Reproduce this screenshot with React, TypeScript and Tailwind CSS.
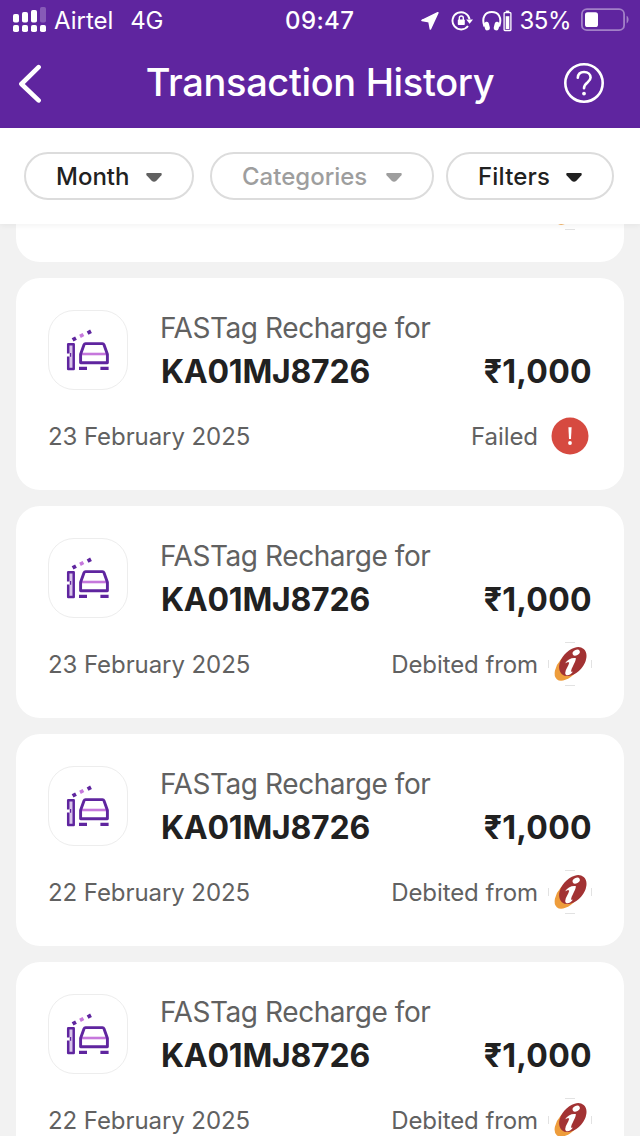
import React from 'react';

interface Transaction {
  id: number;
  title: string;
  vehicle: string;
  amount: string;
  date: string;
  status: 'failed' | 'debited';
}

const transactions: Transaction[] = [
  { id: 2, title: 'FASTag Recharge for', vehicle: 'KA01MJ8726', amount: '₹1,000', date: '23 February 2025', status: 'failed' },
  { id: 3, title: 'FASTag Recharge for', vehicle: 'KA01MJ8726', amount: '₹1,000', date: '23 February 2025', status: 'debited' },
  { id: 4, title: 'FASTag Recharge for', vehicle: 'KA01MJ8726', amount: '₹1,000', date: '22 February 2025', status: 'debited' },
  { id: 5, title: 'FASTag Recharge for', vehicle: 'KA01MJ8726', amount: '₹1,000', date: '22 February 2025', status: 'debited' },
];

const SignalIcon = () => (
  <svg className="mb-0.5 h-[26px] w-[34px]" viewBox="0 0 34 26" fill="#fff">
    <rect x="0" y="7" width="6" height="8.5" rx="1.8" />
    <rect x="9" y="5" width="6" height="10.5" rx="1.8" />
    <rect x="18" y="3" width="6" height="12.5" rx="1.8" />
    <rect x="27" y="0" width="6" height="15.5" rx="1.8" opacity="0.25" />
    <rect x="0" y="18" width="6" height="7" rx="1.8" />
    <rect x="9" y="18" width="6" height="7" rx="1.8" />
    <rect x="18" y="18" width="6" height="7" rx="1.8" />
    <rect x="27" y="18" width="6" height="7" rx="1.8" />
  </svg>
);

const LocationIcon = () => (
  <svg className="h-5 w-[18px]" viewBox="0 0 18 20" fill="#fff" stroke="#fff" strokeWidth="1.6" strokeLinejoin="round">
    <path d="M16.8 1.8 L1 9.4 L8 10.6 L9.4 18 Z" />
  </svg>
);

const RotationLockIcon = () => (
  <svg className="h-5 w-[22px]" viewBox="0 0 22 20" fill="none" stroke="#fff">
    <path d="M18.6 8.4 A8.6 8.6 0 1 0 17 15" strokeWidth="1.9" />
    <path d="M15.2 8.4 H22 L18.6 12.8 Z" fill="#fff" stroke="none" />
    <rect x="6.8" y="8.6" width="7" height="5.4" rx="0.8" fill="#fff" stroke="none" />
    <path d="M8.3 9.5 V7 A2 2 0 0 1 12.3 7 V9.5" strokeWidth="1.4" />
  </svg>
);

const HeadphonesIcon = () => (
  <svg className="h-[22px] w-[30px]" viewBox="0 0 30 22" fill="none" stroke="#fff">
    <path d="M2.4 16.5 C-0.8 7 3.4 2 9.8 2 C16.2 2 20.4 7 17.2 16.5" strokeWidth="2" />
    <rect x="2.4" y="11.8" width="5" height="8.6" rx="2.2" transform="rotate(-14 4.9 16)" fill="#fff" stroke="none" />
    <rect x="12.2" y="11.8" width="5" height="8.6" rx="2.2" transform="rotate(14 14.7 16)" fill="#fff" stroke="none" />
    <rect x="22.1" y="2.7" width="6.8" height="17.8" rx="0.8" strokeWidth="1.3" />
    <rect x="23.7" y="6.2" width="3.6" height="12.8" fill="#fff" stroke="none" />
    <rect x="23.7" y="0.6" width="3.6" height="1.6" fill="#fff" stroke="none" />
  </svg>
);

const BatteryIcon = () => (
  <svg className="mb-0.5 h-6 w-12" viewBox="0 0 48 24" fill="none">
    <rect x="0.9" y="1.2" width="42.2" height="21" rx="5" stroke="#fff" strokeOpacity="0.42" strokeWidth="1.8" />
    <rect x="4" y="4.2" width="13" height="14.8" rx="2.6" fill="#fff" />
    <path d="M45.6 7.8 C48.2 9 48.2 14.2 45.6 15.4 Z" fill="#fff" fillOpacity="0.42" />
  </svg>
);

const TollIcon = () => (
  <svg className="-m-px h-20 w-20" viewBox="0 0 80 80" fill="none">
    <rect x="21" y="35" width="3.8" height="23" fill="#d9c5ea" />
    <path d="M20.2 43.4 V34.2 H25.7 V58.9 H20.2 V46.4" stroke="#5f259f" strokeWidth="2.5" strokeLinejoin="round" />
    <path d="M22.6 46.8 V43" stroke="#5f259f" strokeWidth="1.2" />
    <path d="M24.6 29.9 L28 28.1" stroke="#5f259f" strokeWidth="3.8" />
    <path d="M32 26.3 L35.4 24.5" stroke="#c678dc" strokeWidth="3.6" />
    <path d="M39.6 23.1 L43 21.3" stroke="#5f259f" strokeWidth="3.8" />
    <path d="M34 44 H58" stroke="#c678dc" strokeWidth="2.6" />
    <path d="M37.5 33.6 H54.5 Q55.5 33.6 56 34.8 L59.4 44.2 V52.8 H32.6 V44.2 L36 34.8 Q36.5 33.6 37.5 33.6 Z" stroke="#5f259f" strokeWidth="2.9" strokeLinejoin="round" />
    <path d="M31 58.4 H39 M52.4 58.4 H60.6" stroke="#5f259f" strokeWidth="3.1" />
  </svg>
);

const BankLogo = () => (
  <svg className="h-11 w-11" viewBox="0 0 44 44">
    <path d="M17 0.5 H27 M17 43.5 H27 M0.5 18 V26 M43.5 18 V26" stroke="#e2e2e2" strokeWidth="1" />
    <ellipse cx="20.2" cy="24" rx="17.4" ry="9.8" transform="rotate(-49 20.2 24)" fill="#ee9d3c" />
    <ellipse cx="24.8" cy="19.6" rx="16.6" ry="11" transform="rotate(-49 24.8 19.6)" fill="#a23233" />
    <ellipse cx="28.2" cy="10.6" rx="3.8" ry="2.7" transform="rotate(-28 28.2 10.6)" fill="#fff" />
    <path d="M16.8 21.8 C19.4 17.2 23.6 15.4 27.8 16 C28.2 19.2 24.4 24 23.2 28.6 C23 30.2 23.8 30.4 25 29.6 C22.8 33.6 17.2 34.8 17.2 31 C17.4 27.2 20.6 24 21.2 20.8 C20.4 19.8 18.4 20.4 16.8 21.8 Z" fill="#fff" />
  </svg>
);

const FailedIcon = () => (
  <svg className="h-11 w-11" viewBox="0 0 44 44">
    <circle cx="22" cy="22" r="18.5" fill="#d64a40" />
    <path d="M20.4 13.2 H23.6 L23 25 H21 Z" fill="#fff" />
    <circle cx="22" cy="29" r="1.9" fill="#fff" />
  </svg>
);

interface FilterPillProps {
  label: string;
  className: string;
  caret: string;
}

const FilterPill: React.FC<FilterPillProps> = ({ label, className, caret }) => (
  <button className={`flex h-12 items-center justify-between rounded-full border-2 border-[#dcdcdc] px-[30px] text-2xl font-medium ${className}`}>
    <span className="mt-0.5">{label}</span>
    <svg className="mt-[3px] h-[9px] w-4" viewBox="0 0 16 9" fill={caret}>
      <path d="M1 0 H15 Q16.4 0.6 15.4 2.2 L10.4 7.8 Q8 9.8 5.6 7.8 L0.6 2.2 Q-0.4 0.6 1 0 Z" />
    </svg>
  </button>
);

const TransactionCard: React.FC<{ transaction: Transaction }> = ({ transaction }) => (
  <div className="h-[212px] shrink-0 rounded-3xl bg-white p-8">
    <div className="flex h-[88px]">
      <div className="h-20 w-20 shrink-0 rounded-[26px] border border-[#ededed]">
        <TollIcon />
      </div>
      <div className="ml-8 flex-1 pt-px">
        <p className="text-[28px] leading-[34px] tracking-[-0.43px] text-[#616161]">{transaction.title}</p>
        <div className="flex justify-between text-[32px] leading-[54px] font-bold text-[#212121]">
          <span className="ml-px tracking-[-0.22px]">{transaction.vehicle}</span>
          <span className="tracking-[0.3px]">{transaction.amount}</span>
        </div>
      </div>
    </div>
    <div className="mt-4 flex h-11 items-center text-2xl text-[#616161]">
      <span className="mt-0.5 flex-1 tracking-[-0.08px]">{transaction.date}</span>
      <span className="mt-0.5 mr-2.5 tracking-[-0.08px]">{transaction.status === 'failed' ? 'Failed' : 'Debited from'}</span>
      {transaction.status === 'failed' ? <FailedIcon /> : <BankLogo />}
    </div>
  </div>
);

export default function App() {
  return (
    <div className="flex h-[1136px] w-[640px] flex-col overflow-hidden bg-[#f2f2f2] font-['Inter','Liberation_Sans',sans-serif]">
      <header className="h-32 shrink-0 bg-[#5f259f] text-white">
        <div className="flex h-10 items-center pt-0.5 pr-[11px] pl-[13px] text-2xl">
          <div className="flex w-[272px] items-center">
            <SignalIcon />
            <span className="ml-[7px]">Airtel</span>
            <span className="ml-[17px] tracking-[-0.4px]">4G</span>
          </div>
          <span className="font-medium tracking-[0.4px]">09:47</span>
          <div className="ml-auto flex items-center">
            <LocationIcon />
            <span className="ml-3">
              <RotationLockIcon />
            </span>
            <span className="ml-[9px]">
              <HeadphonesIcon />
            </span>
            <span className="ml-2 tracking-[-0.5px]">35%</span>
            <span className="ml-2.5">
              <BatteryIcon />
            </span>
          </div>
        </div>
        <div className="flex h-[84px] items-center justify-between pt-0.5 pr-9 pl-[18px]">
          <svg className="h-10 w-6" viewBox="0 0 24 40" fill="none" stroke="#fff" strokeWidth="4.6" strokeLinecap="round" strokeLinejoin="round">
            <path d="M20.6 4.2 L3.4 21 L20.6 37.4" />
          </svg>
          <h1 className="mb-0.5 ml-[34px] text-[38px] leading-[80px] font-medium tracking-[-0.35px]">Transaction History</h1>
          <svg className="h-10 w-10" viewBox="0 0 40 40" fill="none" stroke="#fff">
            <circle cx="20" cy="20" r="18.7" strokeWidth="2.6" />
            <path d="M13.8 14.8 C14 10.8 16.6 9 20 9 C24.2 9 26.6 11.4 26.6 14.6 C26.6 19.6 20 19.4 20 25.2" strokeWidth="2.6" strokeLinecap="round" />
            <circle cx="20" cy="30.6" r="1.9" fill="#fff" stroke="none" />
          </svg>
        </div>
      </header>

      <div className="relative z-10 flex h-24 shrink-0 items-center bg-white px-6 shadow-[0_2px_6px_rgba(0,0,0,0.05)]">
        <FilterPill label="Month" className="w-[170px] text-[#212121]" caret="#616161" />
        <FilterPill label="Categories" className="ml-4 w-[224px] text-[#9e9e9e]" caret="#9e9e9e" />
        <FilterPill label="Filters" className="ml-3 w-[168px] tracking-[0.2px] text-[#212121]" caret="#212121" />
      </div>

      <main className="flex min-h-0 flex-1 flex-col gap-4 overflow-hidden px-4">
        {/* tail of the card scrolled under the filter bar */}
        <div className="flex h-[38px] shrink-0 items-end justify-end overflow-hidden rounded-b-3xl bg-white px-8 pb-8">
          <BankLogo />
        </div>
        {transactions.map((transaction) => (
          <TransactionCard key={transaction.id} transaction={transaction} />
        ))}
      </main>
    </div>
  );
}
